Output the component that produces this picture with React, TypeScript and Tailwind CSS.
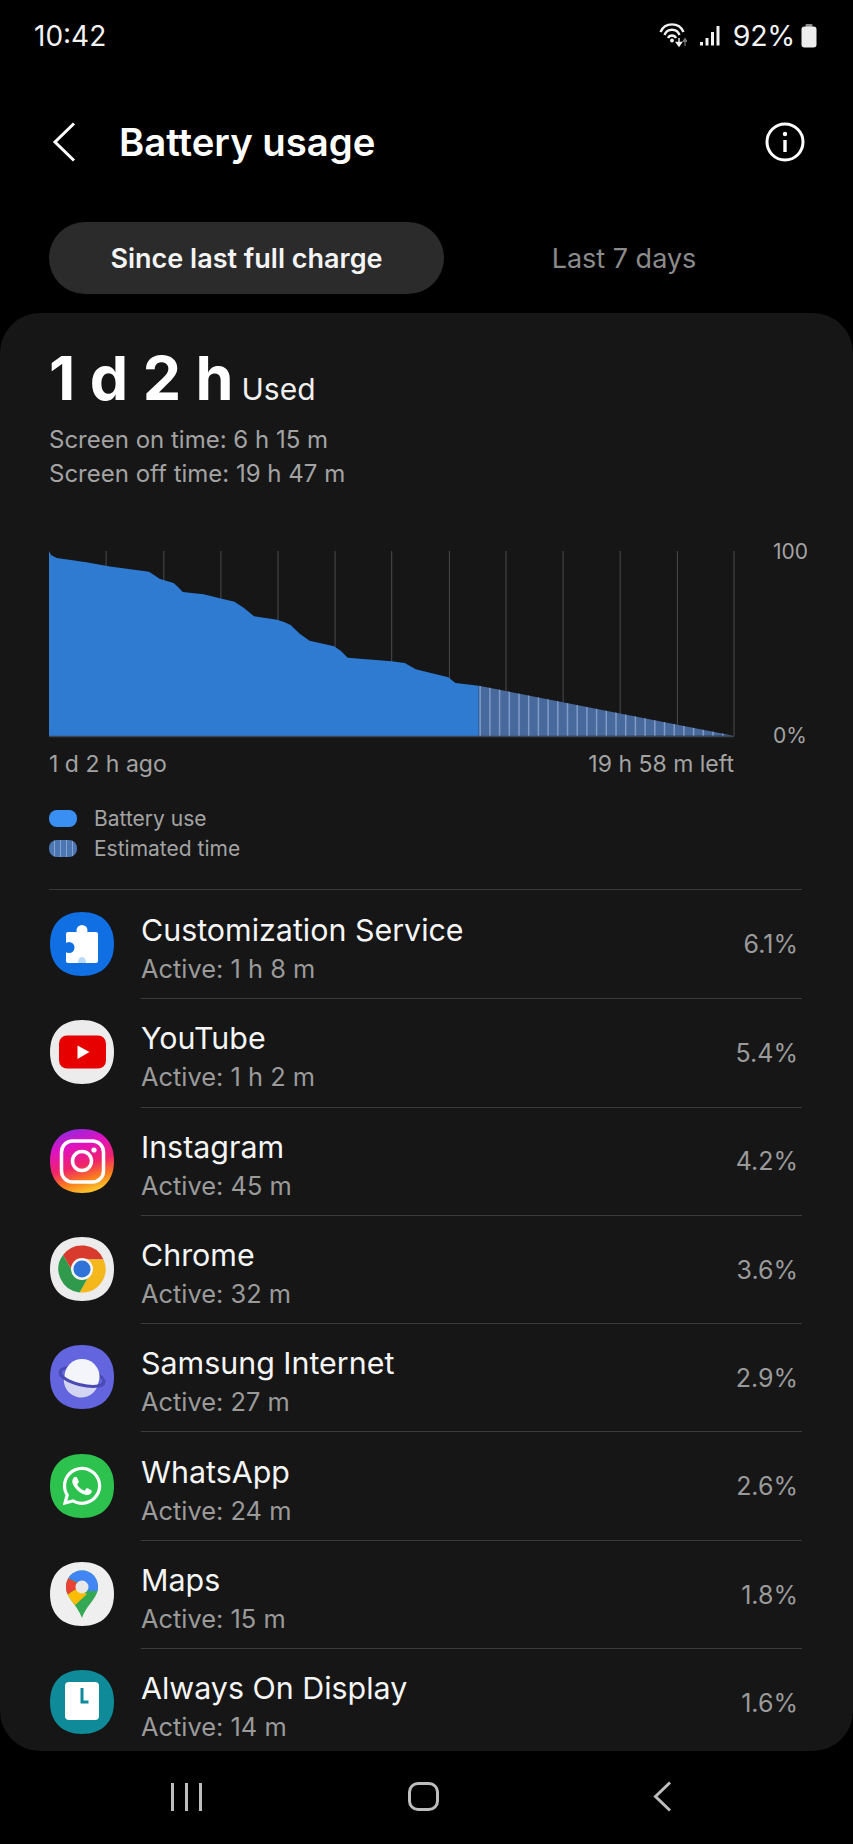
import { FaWhatsapp } from "react-icons/fa";
import type { ReactNode } from "react";

const SQUIRCLE = "M32 0C52 0 64 12 64 32S52 64 32 64 0 52 0 32 12 0 32 0Z";

const AppIcon = ({ bg, children }: { bg: string; children: ReactNode }) => (
  <svg width="64" height="64" viewBox="0 0 64 64" className="ml-[1px] shrink-0">
    <path d={SQUIRCLE} fill={bg} />
    {children}
  </svg>
);

const PuzzleIcon = () => (
  <AppIcon bg="#0f6fe3">
    <rect x="16" y="20" width="32" height="31" rx="2" fill="#fff" />
    <circle cx="32" cy="18.5" r="5.5" fill="#fff" />
    <circle cx="19" cy="35.5" r="5.5" fill="#0f6fe3" />
    <path d="M28 51C28 47 30 45 32 45S36 47 36 51Z" fill="#bcd8f7" />
  </AppIcon>
);

const YoutubeIcon = () => (
  <AppIcon bg="#ececec">
    <rect x="9" y="15.5" width="47" height="33" rx="8" fill="#e60000" />
    <path d="M27.5 25.5L39.5 32L27.5 39Z" fill="#fff" />
  </AppIcon>
);

const InstagramIcon = () => (
  <AppIcon bg="url(#ig)">
    <defs>
      <linearGradient id="ig" x1="0.2" y1="0" x2="0.5" y2="1">
        <stop offset="0" stopColor="#8a2be2" />
        <stop offset="0.3" stopColor="#e012c0" />
        <stop offset="0.6" stopColor="#f0246a" />
        <stop offset="0.82" stopColor="#f97a1e" />
        <stop offset="1" stopColor="#fbc02a" />
      </linearGradient>
    </defs>
    <rect x="11.5" y="12" width="42" height="41" rx="11" fill="none" stroke="#fff" strokeWidth="3.5" />
    <circle cx="32" cy="32" r="9.5" fill="none" stroke="#fff" strokeWidth="3.5" />
    <circle cx="44" cy="21" r="2.6" fill="#fff" />
  </AppIcon>
);

const ChromeIcon = () => (
  <AppIcon bg="#ececec">
    <path d="M13 18.1A23.5 23.5 0 0 1 53.5 22.5L32 22.5L23.8 36.75Z" fill="#d93a2e" />
    <path d="M53.5 22.5A23.5 23.5 0 0 1 29.5 55.4L40.2 36.75L32 22.5Z" fill="#f4b71c" />
    <path d="M29.5 55.4A23.5 23.5 0 0 1 13 18.1L23.8 36.75L40.2 36.75Z" fill="#2f9a4c" />
    <circle cx="32" cy="32" r="11" fill="#f4f4f4" />
    <circle cx="32" cy="32" r="8.5" fill="#2f73d8" />
  </AppIcon>
);

const InternetIcon = () => (
  <AppIcon bg="#6265dd">
    <g transform="rotate(14 32 32)">
      <ellipse cx="32" cy="32" rx="22.5" ry="8" fill="none" stroke="#4a4ab5" strokeWidth="3" />
    </g>
    <circle cx="32" cy="31.5" r="17.5" fill="#f4f4fb" />
    <g transform="rotate(14 32 32)">
      <path d="M14.5 35A17.5 17.5 0 0 0 49.5 35L49 38L15 38Z" fill="#d4d4f3" />
      <path d="M9.5 32A22.5 8 0 0 0 54.5 32" fill="none" stroke="#4a4ab5" strokeWidth="3" />
    </g>
  </AppIcon>
);

const WhatsappIcon = () => (
  <AppIcon bg="#2cc24d">
    <FaWhatsapp x={10} y={10} size={44} color="#fff" />
  </AppIcon>
);

const MapsIcon = () => (
  <AppIcon bg="#efefef">
    <defs>
      <clipPath id="pin">
        <path d="M32 8.5C22 8.5 16 16.5 16 25C16 36 27 42 32 56C37 42 48 36 48 25C48 16.5 42 8.5 32 8.5Z" />
      </clipPath>
    </defs>
    <g clipPath="url(#pin)">
      <rect x="10" y="4" width="44" height="54" fill="#34a853" />
      <path d="M10 37L26 27L37 32L22 46H10Z" fill="#fbbc04" />
      <path d="M10 16H18L27 21L26 27L10 37Z" fill="#ea4335" />
      <path d="M18 16L24 4H54V29L37 29L27 20Z" fill="#4285f4" />
    </g>
    <circle cx="32" cy="25" r="6.5" fill="#e8e8e8" />
  </AppIcon>
);

const AodIcon = () => (
  <AppIcon bg="#0e8a98">
    <rect x="15" y="12" width="34" height="38" rx="4" fill="#fff" />
    <path d="M32 18V32H38.5" fill="none" stroke="#0e8a98" strokeWidth="3" />
  </AppIcon>
);

const apps = [
  { name: "Customization Service", active: "1 h 8 m", pct: "6.1%", icon: <PuzzleIcon /> },
  { name: "YouTube", active: "1 h 2 m", pct: "5.4%", icon: <YoutubeIcon /> },
  { name: "Instagram", active: "45 m", pct: "4.2%", icon: <InstagramIcon /> },
  { name: "Chrome", active: "32 m", pct: "3.6%", icon: <ChromeIcon /> },
  { name: "Samsung Internet", active: "27 m", pct: "2.9%", icon: <InternetIcon /> },
  { name: "WhatsApp", active: "24 m", pct: "2.6%", icon: <WhatsappIcon /> },
  { name: "Maps", active: "15 m", pct: "1.8%", icon: <MapsIcon /> },
  { name: "Always On Display", active: "14 m", pct: "1.6%", icon: <AodIcon /> },
];

const gridXs = [56.6, 114.3, 171.4, 228.5, 285.6, 342.2, 399.9, 456.5, 513.6, 570.7, 627.9, 684.5];
const stripeXs = Array.from({ length: 26 }, (_, i) => 431.2 + i * 9.7);

const USED_CURVE =
  "0,0 2,4 7.6,7 37.5,11.3 59.3,15.3 100,20.7 105,24 111,28 124.6,32 129,36 133.8,41 154.5,43.3 170.8,47.3 185.5,50.7 195,57 205,65.3 228,68.7 235,71 241.6,74 251,83 260.6,89.7 285,95.3 292,100 298.7,106.7 342.2,110.3 355.8,112 366.7,118.3 399.3,126.3 406.4,132 429.8,134.7";

const BatteryChart = () => (
  <svg width="686" height="187" viewBox="0 0 686 187" className="shrink-0">
    <defs>
      <clipPath id="est">
        <path d="M429.8 134.7L684.5 184.7L429.8 185Z" />
      </clipPath>
    </defs>
    {gridXs.map((x) => (
      <line key={x} x1={x + 0.5} y1="0" x2={x + 0.5} y2="185" stroke="#4a4a4c" strokeWidth="1" />
    ))}
    <polygon points={`${USED_CURVE} 429.8,185 0,185`} fill="#2f7bd2" />
    <path d="M429.8 134.7L684.5 184.7L429.8 185Z" fill="#47699b" />
    <g clipPath="url(#est)">
      {stripeXs.map((x) => (
        <line key={x} x1={x} y1="130" x2={x} y2="185" stroke="#7f9bc8" strokeWidth="1.5" />
      ))}
    </g>
    <line x1="0" y1="185.5" x2="685" y2="185.5" stroke="#3c4652" strokeWidth="1.5" />
  </svg>
);

const StatusIcons = () => (
  <div className="flex items-center">
    <svg width="28" height="25" viewBox="0 0 28 25" className="mr-[13px] -mt-[2px]">
      <path d="M1.5 9A12.5 12.5 0 0 1 24.5 9" fill="none" stroke="#f2f2f2" strokeWidth="2.4" />
      <path d="M5.5 12A8 8 0 0 1 20.5 12" fill="none" stroke="#f2f2f2" strokeWidth="2.4" />
      <path d="M9 15A4.5 4.5 0 0 1 17 15" fill="none" stroke="#f2f2f2" strokeWidth="2.4" />
      <circle cx="13" cy="17.5" r="1.9" fill="#f2f2f2" />
      <path d="M20 15V21M17.5 19.5L20 23L22.5 19.5Z" fill="#f2f2f2" stroke="#f2f2f2" strokeWidth="1.4" />
      <path d="M26 23V16M24 18.5L26 15.5L28 18.5Z" fill="#777" stroke="#777" strokeWidth="1.2" />
    </svg>
    <svg width="20" height="20" viewBox="0 0 20 20" className="mr-[13px]">
      <rect x="0" y="16" width="3" height="3.5" fill="#f2f2f2" />
      <rect x="5.5" y="12" width="3" height="7.5" fill="#f2f2f2" />
      <rect x="11" y="6" width="3" height="13.5" fill="#f2f2f2" />
      <rect x="16.5" y="0" width="3" height="19.5" fill="#f2f2f2" />
    </svg>
    <span className="text-[28.5px] leading-none text-[#f2f2f2] tracking-[-0.3px]">92%</span>
    <svg width="16" height="24" viewBox="0 0 16 24" className="ml-[6px]">
      <rect x="4.5" y="0" width="7" height="3" rx="1" fill="#8a8a8a" />
      <rect x="0.5" y="2.5" width="15" height="21" rx="3" fill="#ededed" />
    </svg>
  </div>
);

const NavBar = () => (
  <div className="flex h-[93px] items-start pt-[30px]">
    <div className="flex w-full items-center">
      <svg width="31" height="30" viewBox="0 0 31 30" className="ml-[171px]">
        <path d="M1.5 1V29M15.5 1V29M29.5 1V29" stroke="#bdbdbd" strokeWidth="3" fill="none" />
      </svg>
      <div className="ml-[206px] h-[29px] w-[31px] rounded-[10px] border-[3px] border-[#bdbdbd]" />
      <svg width="19" height="31" viewBox="0 0 19 31" className="ml-[214px]">
        <path d="M17 1.5L2.5 15.5L17 29.5" stroke="#bdbdbd" strokeWidth="3" fill="none" />
      </svg>
    </div>
  </div>
);

export default function App() {
  return (
    <div className="flex h-[1844px] w-[853px] flex-col overflow-hidden bg-black font-['Inter',sans-serif] text-white">
      <div className="flex h-[72px] items-center justify-between pr-[36px] pl-[34px]">
        <span className="text-[28px] leading-none text-[#f2f2f2]">10:42</span>
        <StatusIcons />
      </div>

      <div className="flex h-[140px] items-center pr-[48px] pl-[52px]">
        <svg width="24" height="40" viewBox="0 0 24 40" className="mb-[1px]">
          <path d="M22 1.5L3 20L22 38.5" stroke="#fff" strokeWidth="3" fill="none" />
        </svg>
        <h1 className="ml-[43px] flex-1 text-[38.3px] leading-none font-semibold">Battery usage</h1>
        <svg width="40" height="40" viewBox="0 0 40 40">
          <circle cx="20" cy="20" r="18" stroke="#fff" strokeWidth="3" fill="none" />
          <circle cx="20" cy="12" r="2.2" fill="#fff" />
          <path d="M20 18V30" stroke="#fff" strokeWidth="3.4" />
        </svg>
      </div>

      <div className="mt-[10px] flex h-[72px] px-[49px]">
        <div className="flex w-[395px] items-center justify-center rounded-full bg-[#2b2b2c] pt-[3px] text-[27px] font-semibold text-[#f4f4f4]">
          Since last full charge
        </div>
        <div className="flex flex-1 items-center justify-center pt-[3px] text-[27px] text-[#8b8b8b]">Last 7 days</div>
      </div>

      <main className="mt-[19px] h-[1438px] overflow-hidden rounded-[40px] bg-[#161617] px-[49px]">
        <div className="flex items-baseline pt-[27px]">
          <span className="text-[61px] leading-[76px] font-bold">1 d 2 h</span>
          <span className="ml-[8px] text-[30px] text-[#f0f0f0]">Used</span>
        </div>
        <div className="mt-[7px] text-[24px] leading-[34px] text-[#a3a3a3]">
          <p>Screen on time: 6 h 15 m</p>
          <p>Screen off time: 19 h 47 m</p>
        </div>

        <div className="mt-[60px] flex h-[187px]">
          <BatteryChart />
          <div className="ml-[38px] flex flex-col justify-between text-[21px] leading-none text-[#a3a3a3]">
            <span className="-mt-[10px]">100</span>
            <span className="-mb-[8px]">0%</span>
          </div>
        </div>

        <div className="mt-[12px] flex w-[685px] justify-between text-[23px] leading-[28px] text-[#a3a3a3]">
          <span>1 d 2 h ago</span>
          <span>19 h 58 m left</span>
        </div>

        <div className="mt-[32px] flex flex-col gap-[13px] text-[21px] leading-[17px] text-[#a3a3a3]">
          <div className="flex items-center gap-[17px]">
            <span className="h-[17px] w-[28px] rounded-[8px] bg-[#3a8ff2]" />
            Battery use
          </div>
          <div className="flex items-center gap-[17px]">
            <span className="h-[17px] w-[28px] rounded-[8px] bg-[repeating-linear-gradient(90deg,#4d77b3_0,#4d77b3_5px,#86a3cf_5px,#86a3cf_6px)]" />
            Estimated time
          </div>
        </div>

        <div className="mt-[32px] h-px w-[753px] bg-[#3a3a3c]" />
        {apps.map((app, i) => (
          <div key={app.name} className="flex w-[753px] items-center gap-[27px]">
            {app.icon}
            <div
              className={`flex h-[108.3px] flex-1 items-center justify-between pr-[4px] ${i > 0 ? "border-t border-[#3a3a3c]" : ""}`}
            >
              <div className="pt-[6px]">
                <div className="text-[30.4px] leading-[40px] text-[#f5f5f5]">{app.name}</div>
                <div className="mt-[3px] text-[25.4px] leading-[32px] text-[#9a9a9a]">Active: {app.active}</div>
              </div>
              <span className="pt-[2px] text-[25px] text-[#9a9a9a]">{app.pct}</span>
            </div>
          </div>
        ))}
      </main>

      <NavBar />
    </div>
  );
}
